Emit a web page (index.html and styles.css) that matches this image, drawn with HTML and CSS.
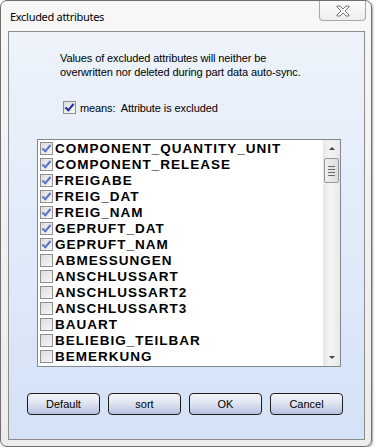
FILE: index.html
```html
<!DOCTYPE html>
<html lang="en">
<head>
    <meta charset="UTF-8">
    <title>Excluded attributes</title>
    <link rel="stylesheet" href="styles.css">
</head>
<body>
    <div class="window">
        <div class="titlebar">
            <span class="title">Excluded attributes</span>
            <div class="close-btn">
                <svg width="16" height="12" viewBox="0 0 16 12">
                    <path d="M2 1h3l3 3 3-3h3v1l-4 4 4 4v1h-3l-3-3-3 3H2v-1l4-4-4-4z" fill="#fafafa" stroke="#777" stroke-width="1"/>
                </svg>
            </div>
        </div>

        <div class="client">
            <p class="note">Values of excluded attributes will neither be<br>overwritten nor deleted during part data auto-sync.</p>

            <div class="legend">
                <span class="box checked dark"></span>
                <span>means:&nbsp; Attribute is excluded</span>
            </div>

            <div class="listbox">
                <ul class="items">
                    <li><span class="box checked"></span>COMPONENT_QUANTITY_UNIT</li>
                    <li><span class="box checked"></span>COMPONENT_RELEASE</li>
                    <li><span class="box checked"></span>FREIGABE</li>
                    <li><span class="box checked"></span>FREIG_DAT</li>
                    <li><span class="box checked"></span>FREIG_NAM</li>
                    <li><span class="box checked"></span>GEPRUFT_DAT</li>
                    <li><span class="box checked"></span>GEPRUFT_NAM</li>
                    <li><span class="box"></span>ABMESSUNGEN</li>
                    <li><span class="box"></span>ANSCHLUSSART</li>
                    <li><span class="box"></span>ANSCHLUSSART2</li>
                    <li><span class="box"></span>ANSCHLUSSART3</li>
                    <li><span class="box"></span>BAUART</li>
                    <li><span class="box"></span>BELIEBIG_TEILBAR</li>
                    <li><span class="box"></span>BEMERKUNG</li>
                </ul>
                <div class="scrollbar">
                    <span class="arrow up"></span>
                    <div class="track">
                        <div class="thumb"><i></i><i></i><i></i><i></i></div>
                    </div>
                    <span class="arrow down"></span>
                </div>
            </div>

            <div class="buttons">
                <button>Default</button>
                <button>sort</button>
                <button>OK</button>
                <button>Cancel</button>
            </div>
        </div>
    </div>
</body>
</html>
```

FILE: styles.css
```css
body {
    margin: 0;
    background: #ffffff;
    font-family: "Liberation Sans", Arial, sans-serif;
}
.window {
    width: 370px;
    height: 445px;
    border: 1px solid #6f6f6f;
    border-radius: 7px;
    background: linear-gradient(#f7f7f7, #ececec);
    box-shadow: 1px 1px 2px rgba(0,0,0,0.35);
    display: flex;
    flex-direction: column;
}
.titlebar {
    height: 30px;
    display: flex;
    justify-content: space-between;
    align-items: flex-start;
}
.title {
    font-family: "Noto Sans", "DejaVu Sans", sans-serif;
    font-size: 11px;
    letter-spacing: -0.3px;
    color: #000;
    margin: 8px 0 0 9px;
}
.close-btn {
    width: 45px;
    height: 19px;
    margin-right: 5px;
    border: 1px solid #a8a8a8;
    border-top: none;
    border-radius: 0 0 4px 4px;
    background: linear-gradient(#fdfdfd, #ededed);
    display: flex;
    align-items: center;
    justify-content: center;
}
.client {
    flex: 1;
    margin: 0 6px 6px 7px;
    border: 1px solid #8c8c8c;
    background: linear-gradient(#eef3fb, #d4e2f7);
    display: flex;
    flex-direction: column;
}
.note {
    margin: 19px 0 0 51px;
    font-size: 11px;
    line-height: 14px;
    color: #000;
    letter-spacing: -0.1px;
}
.legend {
    display: flex;
    align-items: center;
    gap: 4px;
    margin: 22px 0 0 54px;
    font-size: 11px;
    letter-spacing: -0.1px;
}
.box {
    width: 11px;
    height: 11px;
    border: 1px solid #8f8f8f;
    background: linear-gradient(135deg, #dcdcdc, #f7f7f7);
    flex: none;
    position: relative;
}
.box.checked::after {
    content: "";
    position: absolute;
    left: 3px;
    top: 0px;
    width: 3px;
    height: 7px;
    border: solid #5a72c2;
    border-width: 0 2px 2px 0;
    transform: rotate(40deg);
}
.box.dark::after {
    border-color: #1c2f9c;
}
.listbox {
    margin: 25px 0 0 28px;
    width: 302px;
    height: 226px;
    border: 1px solid #828790;
    background: #fff;
    display: flex;
}
.items {
    list-style: none;
    margin: 0 0 0 2px;
    padding: 0;
    flex: 1;
    overflow: hidden;
}
.items li {
    height: 16px;
    display: flex;
    align-items: center;
    gap: 2px;
    font-weight: bold;
    font-size: 13.5px;
    letter-spacing: 1px;
    color: #000;
    white-space: nowrap;
}
.scrollbar {
    width: 17px;
    background: linear-gradient(90deg, #e6e6e6, #f4f4f4 40%, #e9e9e9);
    display: flex;
    flex-direction: column;
}
.arrow {
    height: 17px;
    display: flex;
    align-items: center;
    justify-content: center;
}
.arrow::before {
    content: "";
    border-left: 3px solid transparent;
    border-right: 3px solid transparent;
}
.arrow.up::before {
    border-bottom: 3px solid #444;
}
.arrow.down::before {
    border-top: 3px solid #444;
}
.track {
    flex: 1;
}
.thumb {
    margin: 1px 1px 0 1px;
    height: 23px;
    border: 1px solid #979797;
    border-radius: 2px;
    background: linear-gradient(90deg, #f1f1f1, #dcdcdc);
    display: flex;
    flex-direction: column;
    justify-content: center;
    align-items: center;
    gap: 2px;
}
.thumb i {
    width: 7px;
    height: 1px;
    background: #6a6a6a;
}
.buttons {
    display: flex;
    gap: 8px;
    margin: 26px 0 0 18px;
}
button {
    width: 73px;
    height: 22px;
    border: 1px solid #1e1e1e;
    border-radius: 4px;
    background: linear-gradient(#f3f4f8, #e0e5f2 45%, #b7c2e2);
    font-family: "Liberation Sans", Arial, sans-serif;
    font-size: 11px;
    color: #000;
    padding: 0;
}
```
